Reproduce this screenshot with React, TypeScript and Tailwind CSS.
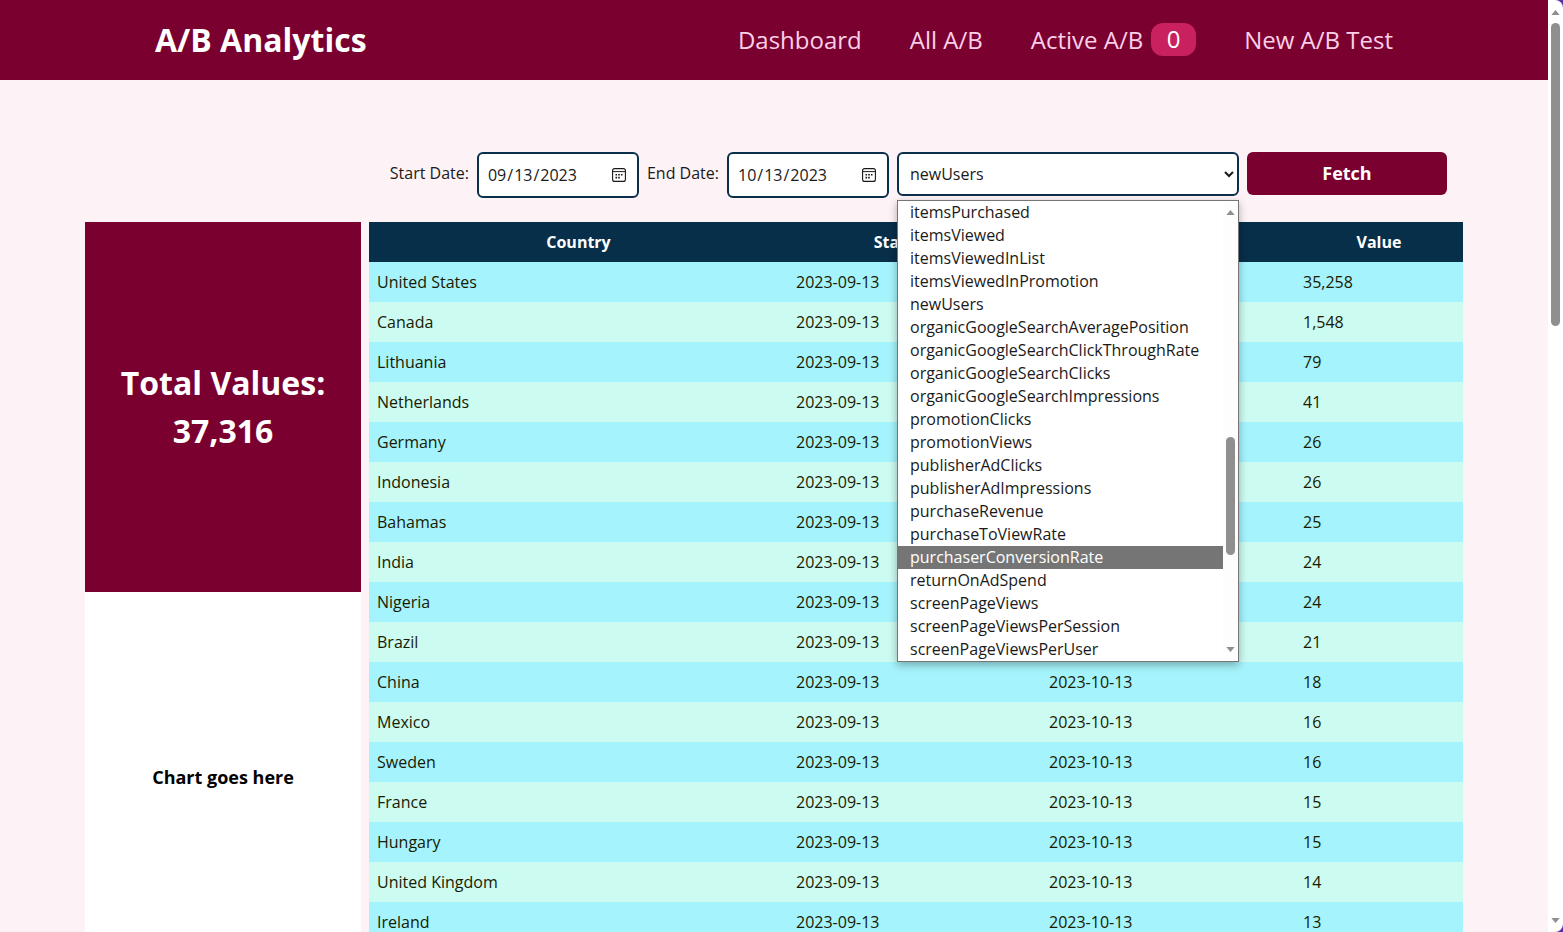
import { useState } from 'react';

const rows: [string, string][] = [
  ['United States', '35,258'],
  ['Canada', '1,548'],
  ['Lithuania', '79'],
  ['Netherlands', '41'],
  ['Germany', '26'],
  ['Indonesia', '26'],
  ['Bahamas', '25'],
  ['India', '24'],
  ['Nigeria', '24'],
  ['Brazil', '21'],
  ['China', '18'],
  ['Mexico', '16'],
  ['Sweden', '16'],
  ['France', '15'],
  ['Hungary', '15'],
  ['United Kingdom', '14'],
  ['Ireland', '13'],
];

const metrics = [
  'itemsPurchased',
  'itemsViewed',
  'itemsViewedInList',
  'itemsViewedInPromotion',
  'newUsers',
  'organicGoogleSearchAveragePosition',
  'organicGoogleSearchClickThroughRate',
  'organicGoogleSearchClicks',
  'organicGoogleSearchImpressions',
  'promotionClicks',
  'promotionViews',
  'publisherAdClicks',
  'publisherAdImpressions',
  'purchaseRevenue',
  'purchaseToViewRate',
  'purchaserConversionRate',
  'returnOnAdSpend',
  'screenPageViews',
  'screenPageViewsPerSession',
  'screenPageViewsPerUser',
];

const Triangle = ({ down }: { down?: boolean }) => (
  <svg viewBox="0 0 10 6" className="w-[9px] h-[5px] shrink-0 fill-[#8f8f8f]">
    <path d={down ? 'M0 0h10L5 6z' : 'M5 0l5 6H0z'} />
  </svg>
);

const CalendarIcon = () => (
  <svg viewBox="0 0 14 14" className="absolute right-[13px] top-4 w-3.5 h-3.5 pointer-events-none">
    <rect x="0.6" y="0.6" width="12.8" height="12.8" rx="2" fill="none" stroke="#1a1a1a" strokeWidth="1.1" />
    <path d="M1 3.6h12" stroke="#1a1a1a" strokeWidth="1" />
    <path d="M3.5 6h1.6v1.6H3.5zM6.2 6h1.6v1.6H6.2zM8.9 6h1.6v1.6H8.9zM3.5 8.8h1.6v1.6H3.5zM6.2 8.8h1.6v1.6H6.2z" fill="#1a1a1a" />
  </svg>
);

const DateField = ({ value, onChange }: { value: string; onChange: (v: string) => void }) => (
  <div className="relative">
    <input
      type="date"
      value={value}
      onChange={(e) => onChange(e.target.value)}
      className="w-[162px] h-[46px] bg-white border-2 border-[#0a2f4a] rounded-md pl-2 pr-[9px] [&::-webkit-calendar-picker-indicator]:opacity-0"
    />
    <CalendarIcon />
  </div>
);

const MetricSelect = () => (
  <div className="relative w-[342px]">
    <select
      defaultValue="newUsers"
      className="w-full h-11 bg-white border-2 border-[#0a2f4a] rounded-md pl-[7px] pr-1 text-base text-[#1a1a1a]"
    >
      {metrics.map((m) => (
        <option key={m}>{m}</option>
      ))}
    </select>
    <div className="absolute z-10 left-0 top-12 w-[342px] h-[462px] bg-white border border-[#767676] shadow-[0_3px_8px_rgba(0,0,0,0.3)] flex">
      <ul className="w-[325px] text-base text-[#1a1a1a]">
        {metrics.map((m) => (
          <li
            key={m}
            className={`h-[23px] leading-[22px] pl-3 whitespace-nowrap ${m === 'purchaserConversionRate' ? 'bg-[#757575] text-white' : ''}`}
          >
            {m}
          </li>
        ))}
      </ul>
      <div className="flex-1 bg-[#fdfdfd] flex flex-col items-center py-[9px]">
        <Triangle />
        <div className="w-[9px] h-[118px] rounded-full bg-[#8f8f8f] mt-[222px]" />
        <div className="flex-1" />
        <Triangle down />
      </div>
    </div>
  </div>
);

export default function App() {
  const [start, setStart] = useState('2023-09-13');
  const [end, setEnd] = useState('2023-10-13');

  return (
    <div className="h-screen overflow-hidden flex bg-[#5b2ea6] font-['Open_Sans',sans-serif]">
      <div className="w-[1548px] shrink-0 bg-[#fdf2f6] overflow-hidden">
        <nav className="h-20 bg-[#7a0030] flex items-center justify-between px-[155px]">
          <span className="text-[32px] font-bold text-white">A/B Analytics</span>
          <div className="flex items-center gap-12 text-2xl text-[#fbcfe8]">
            <a>Dashboard</a>
            <a>All A/B</a>
            <a className="flex items-center gap-2">
              Active A/B
              <span className="w-[45px] h-[33px] -translate-y-px rounded-xl bg-[#c9205f] text-white flex items-center justify-center">0</span>
            </a>
            <a>New A/B Test</a>
          </div>
        </nav>

        <main className="px-[85px] pt-[72px]">
          <div className="flex justify-end items-start gap-2 pr-4 h-[70px] text-base text-[#1a1a1a]">
            <label className="mt-[9px]">Start Date:</label>
            <DateField value={start} onChange={setStart} />
            <label className="mt-[9px]">End Date:</label>
            <DateField value={end} onChange={setEnd} />
            <MetricSelect />
            <button className="w-[200px] h-[43px] pb-[2px] rounded-md bg-[#7a0030] text-white text-lg font-bold">Fetch</button>
          </div>

          <div className="flex gap-2 items-start">
            <aside className="w-[276px] shrink-0">
              <div className="h-[370px] bg-[#7a0030] text-white text-[32px] leading-[48px] font-bold flex flex-col items-center justify-center">
                <span>Total Values:</span>
                <span>37,316</span>
              </div>
              <div className="h-[370px] bg-white flex items-center justify-center text-lg font-bold text-black">
                Chart goes here
              </div>
            </aside>

            <table className="w-[1094px] table-fixed text-base text-[#1a1a00]">
              <thead>
                <tr className="h-10 bg-[#072f4a] text-white font-bold">
                  <th className="w-[419px]">Country</th>
                  <th className="w-[253px]">Start Date</th>
                  <th className="w-[254px]">End Date</th>
                  <th className="w-[168px]">Value</th>
                </tr>
              </thead>
              <tbody>
                {rows.map(([country, value], i) => (
                  <tr key={country} className={`h-10 ${i % 2 === 0 ? 'bg-[#a5f3fc]' : 'bg-[#ccfbf1]'}`}>
                    <td className="px-2">{country}</td>
                    <td className="px-2">2023-09-13</td>
                    <td className="px-2">2023-10-13</td>
                    <td className="px-2">{value}</td>
                  </tr>
                ))}
              </tbody>
            </table>
          </div>
        </main>
      </div>

      <div className="w-[15px] shrink-0 bg-white rounded-tr-[8px] rounded-br-[8px] flex flex-col items-center pt-[10px] pb-[9px]">
        <Triangle />
        <div className="w-[9px] h-[303px] rounded-full bg-[#8f8f8f] mt-[8px]" />
        <div className="flex-1" />
        <Triangle down />
      </div>
    </div>
  );
}
